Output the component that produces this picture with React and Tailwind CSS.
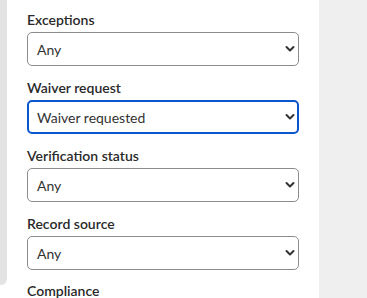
import React from "react";

function Field({ label, value, focused }) {
  return (
    <div className="flex flex-col">
      <div className="text-[14px] leading-[18px] font-semibold text-[#2a2a2a]">{label}</div>
      <div
        className={
          focused
            ? "relative mt-[3px] h-[34px] rounded-[5px] border-2 border-[#0a56cc] bg-white flex items-center pl-[8px] pr-[20px]"
            : "relative mt-[3px] h-[34px] rounded-[5px] border border-[#8c8c8c] bg-white flex items-center pl-[9px] pr-[20px]"
        }
      >
        <span className="text-[14px] text-[#333]">{value}</span>
        <svg
          width="10"
          height="7"
          viewBox="0 0 10 7"
          fill="none"
          className={focused ? "absolute right-[2px] top-1/2 -translate-y-1/2" : "absolute right-[3px] top-1/2 -translate-y-1/2"}
        >
          <path d="M1.5 1.5 L5 5 L8.5 1.5" stroke="#333" strokeWidth="2" strokeLinecap="round" strokeLinejoin="round" />
        </svg>
      </div>
    </div>
  );
}

export default function App() {
  return (
    <div className="w-[367px] h-[298px] flex bg-white overflow-hidden" style={{ fontFamily: "Lato, 'Open Sans', sans-serif" }}>
      <div className="w-[7px] h-[285px] bg-[#e3e3e3] rounded-br-[6px] shrink-0" />
      <div className="w-[312px] shrink-0 px-[20px] pt-[11px] flex flex-col gap-[13px]">
        <Field label="Exceptions" value="Any" />
        <Field label="Waiver request" value="Waiver requested" focused />
        <Field label="Verification status" value="Any" />
        <Field label="Record source" value="Any" />
        <div className="-mt-[1px] text-[14px] leading-[18px] font-semibold text-[#2a2a2a]">Compliance</div>
      </div>
      <div className="flex-1 bg-[#efefef]" />
    </div>
  );
}
